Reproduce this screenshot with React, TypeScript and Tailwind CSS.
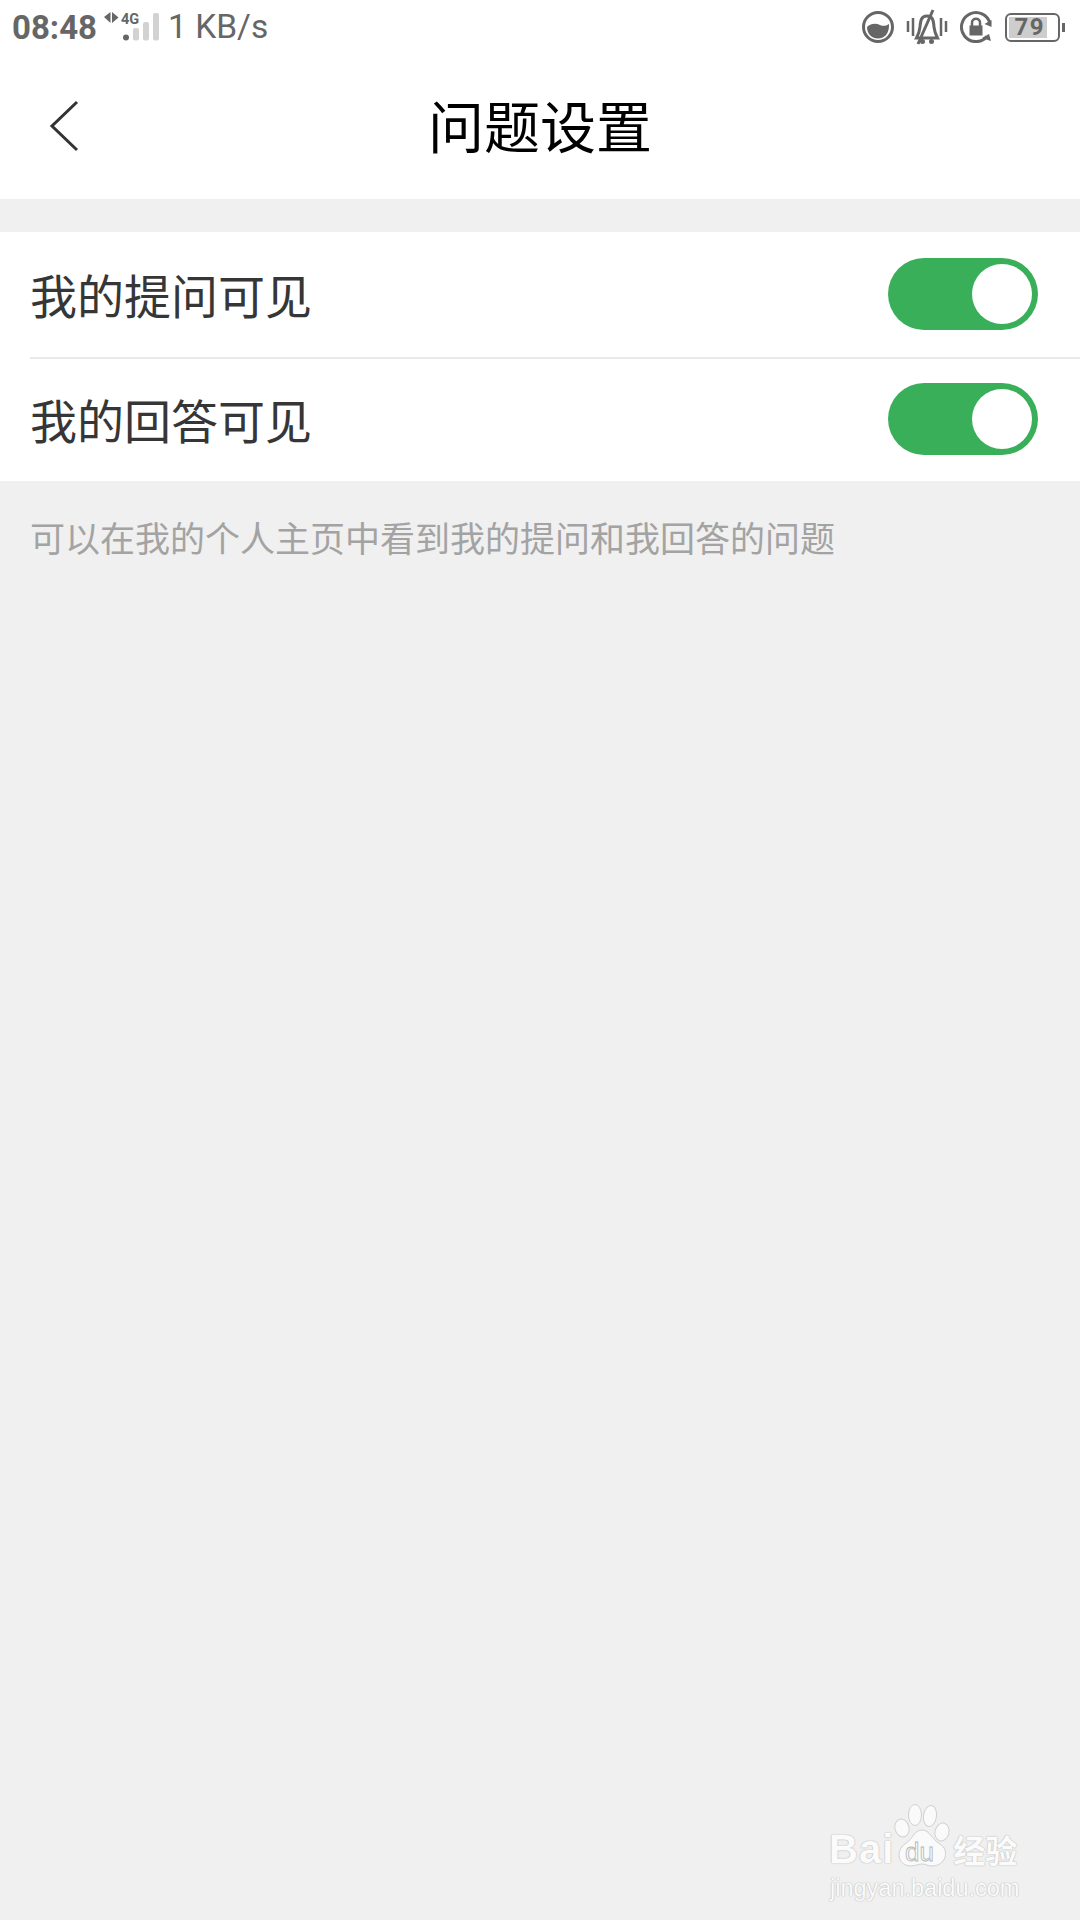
const cjk = "font-['Noto_Sans_CJK_SC','Noto_Sans',sans-serif]";

function SignalIcons() {
  return (
    <svg width="60" height="36" viewBox="0 0 60 36">
      <path d="M3 8 L9.500 3 V14 Z" fill="#666" />
      <path d="M11 3 V14 L17.500 8.500 Z" fill="#666" />
      <text x="20" y="15" fontSize="14.500" fontWeight="700" fill="#666" fontFamily="Roboto, sans-serif">4G</text>
      <circle cx="25" cy="28.500" r="3" fill="#666" />
      <rect x="32" y="19" width="6" height="12.500" rx="2" fill="#d2d2d2" />
      <rect x="42" y="13" width="6" height="18.500" rx="2" fill="#d2d2d2" />
      <rect x="52" y="4" width="6" height="27.500" rx="2" fill="#d2d2d2" />
    </svg>
  );
}

function Toggle() {
  return (
    <div className="flex h-[72px] w-[150px] items-center justify-end rounded-full bg-[#3aaf5a] pr-[6px]">
      <div className="h-[60px] w-[60px] rounded-full bg-white" />
    </div>
  );
}

function Row({ label, className }: { label: string; className: string }) {
  return (
    <div className={`flex items-center justify-between pl-[30px] pr-[42px] ${className}`}>
      <span className={`${cjk} -mt-[2px] text-[47px] leading-none text-[#363636]`}>{label}</span>
      <Toggle />
    </div>
  );
}

function Watermark() {
  const stroke = { textShadow: "0 0 1.500px #b4b4b4, 0 0 1px #c4c4c4" };
  return (
    <div className="flex w-[192px] flex-col items-start text-[#fbfbfb]">
      <div className="flex h-[64px] items-end whitespace-nowrap">
        <span className="-ml-[1px] font-['Liberation_Sans',sans-serif] text-[40px] font-bold leading-[38px] tracking-[1px]" style={stroke}>Bai</span>
        <svg width="58" height="64" viewBox="0 -2 58 64" className="shrink-0">
          <g fill="#fafafa" stroke="#d0d0d0" strokeWidth="1">
            <ellipse cx="8" cy="22" rx="7" ry="9" transform="rotate(-15 8 22)" />
            <ellipse cx="21" cy="9" rx="6.500" ry="10.500" />
            <ellipse cx="36" cy="10" rx="6.500" ry="10.500" transform="rotate(8 36 10)" />
            <ellipse cx="48" cy="26" rx="7" ry="9" transform="rotate(15 48 26)" />
            <path d="M28 24 C36 24 38 34 46 38 C56 44 52 60 38 60 C33 60 32 58 28 58 C24 58 22 60 17 60 C4 60 1 45 11 38 C19 33 20 24 28 24 Z" />
          </g>
          <text x="11" y="55" fontSize="26" fill="#fafafa" stroke="#b4b4b4" strokeWidth="0.800" fontFamily="Liberation Sans, sans-serif">du</text>
        </svg>
        <span className={`${cjk} ml-[1px] text-[32px] font-bold leading-[38px]`} style={stroke}>经验</span>
      </div>
      <span className="mt-[7px] whitespace-nowrap font-['Liberation_Sans',sans-serif] text-[23.500px] leading-[27px]" style={stroke}>jingyan.baidu.com</span>
    </div>
  );
}

export default function App() {
  return (
    <div className="flex h-[1920px] w-[1080px] flex-col overflow-hidden bg-[#f0f0f0]">
      <div className="bg-white">
        <div className="flex h-[54px] items-center justify-between pl-[12px] pr-[15px] font-['Roboto',sans-serif] text-[#666]">
          <div className="flex items-center">
            <span className="text-[33px] font-bold leading-none">08:48</span>
            <span className="ml-[4px] flex"><SignalIcons /></span>
            <span className="ml-[7px] text-[33.500px] leading-none">1 KB/s</span>
          </div>
          <div className="flex items-center">
            <svg width="32" height="32" viewBox="0 0 32 32">
              <circle cx="16" cy="16" r="14.500" fill="none" stroke="#666" strokeWidth="3" />
              <path d="M5 16 C9 12 14 12 18 14 C21 15.500 24 15 27 13 C27.500 22 23 27.500 16 27.500 C10 27.500 5 23 5 16 Z" fill="#666" />
            </svg>
            <svg width="42" height="36" viewBox="0 0 42 36" className="ml-[12px]">
              <path d="M2 12 V23 M7 9 V27 M35 9 V27 M40 12 V23" stroke="#666" strokeWidth="2.500" fill="none" />
              <path d="M21 7 C15 7 14.500 12 14 18 C13.500 23 12 26 10.500 29 H31.500 C30 26 28.500 23 28 18 C27.500 12 27 7 21 7 Z" fill="none" stroke="#666" strokeWidth="3" />
              <path d="M12 35 L27 1" stroke="#666" strokeWidth="3" />
              <circle cx="16.500" cy="32.500" r="2.500" fill="#666" />
              <circle cx="25.500" cy="32.500" r="2.500" fill="#666" />
            </svg>
            <svg width="32" height="32" viewBox="0 0 32 32" className="ml-[12px]">
              <path d="M30 12.500 A14.500 14.500 0 1 0 27 25.500" fill="none" stroke="#666" strokeWidth="3" />
              <path d="M24.500 13 L31.500 9 L31.500 16 Z" fill="#666" />
              <path d="M22 27 L29 23 L31 30 Z" fill="#666" />
              <rect x="9.500" y="14.500" width="13" height="10" fill="#666" />
              <path d="M12 15 V11.500 C12 6.500 20 6.500 20 11.500 V15" fill="none" stroke="#666" strokeWidth="2.500" />
            </svg>
            <div className="ml-[13px] flex items-center">
              <div className="flex h-[29px] w-[55px] items-center rounded-[6px] border-2 border-[#666] py-[2px] pl-[2px]">
                <div className="flex h-full w-[38px] items-center justify-end bg-[#cdcdcd] pr-[2px] text-[24px] font-bold leading-none tracking-[1.500px]">79</div>
              </div>
              <div className="ml-[2px] h-[9px] w-[3px] bg-[#666]" />
            </div>
          </div>
        </div>
        <div className="relative flex h-[145px] items-center justify-center pb-[6px]">
          <svg width="34" height="52" viewBox="0 0 34 52" className="absolute left-[48px] top-[46px]">
            <path d="M29 2 L4 26 L29 50" fill="none" stroke="#333" strokeWidth="3" />
          </svg>
          <span className={`${cjk} text-[56px] leading-none text-black`}>问题设置</span>
        </div>
      </div>
      <div className="mt-[33px] bg-white">
        <Row label="我的提问可见" className="h-[125px] pb-[1px]" />
        <div className="ml-[30px] h-[2px] bg-[#e9e9e9]" />
        <Row label="我的回答可见" className="h-[122px] pb-[2px]" />
      </div>
      <p className={`${cjk} pl-[30px] pt-[36px] text-[35px] leading-[40px] text-[#a3a3a3]`}>可以在我的个人主页中看到我的提问和我回答的问题</p>
      <div className="flex flex-1 items-end justify-end pb-[18px] pr-[58px]">
        <Watermark />
      </div>
    </div>
  );
}
